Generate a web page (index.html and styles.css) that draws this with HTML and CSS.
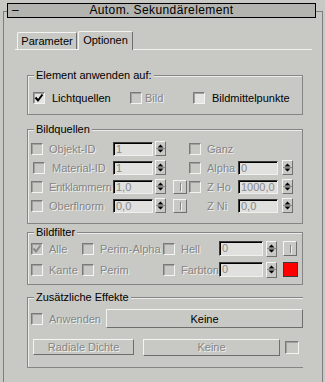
FILE: index.html
```html
<!DOCTYPE html>
<html lang="de">
<head>
  <meta charset="UTF-8" />
  <title>Autom. Sekundärelement</title>
  <link rel="stylesheet" href="styles.css">
</head>
<body>

  <div class="rollout">
    <!-- Rollout title -->
    <div class="titlebar">
      <span class="minus">–</span>
      <span class="title">Autom. Sekundärelement</span>
      <span class="title-pad"></span>
    </div>

    <!-- Tabs -->
    <div class="tabs">
      <div class="tab">Parameter</div>
      <div class="tab active">Optionen</div>
    </div>

    <!-- Element anwenden auf -->
    <div class="group g-apply">
      <div class="group-title">Element anwenden auf:</div>
      <div class="group-body">
        <div class="apply-row">
          <div class="opt w-light">
            <span class="cb on"><svg width="10" height="10" viewBox="0 0 10 10"><path d="M1.5 4.5l2.5 3 4.5-6" fill="none" stroke="#000" stroke-width="2"/></svg></span>
            <span>Lichtquellen</span>
          </div>
          <div class="opt w-bild tight">
            <span class="cb"></span>
            <span class="off">Bild</span>
          </div>
          <div class="opt">
            <span class="cb on"></span>
            <span>Bildmittelpunkte</span>
          </div>
        </div>
      </div>
    </div>

    <!-- Bildquellen -->
    <div class="group g-src">
      <div class="group-title">Bildquellen</div>
      <div class="group-body">
        <div class="src-row">
          <span class="cb"></span>
          <span class="lbl off w64">Objekt-ID</span>
          <span class="field w40">1</span>
          <span class="spin"><svg width="9" height="13" viewBox="0 0 9 13"><path d="M1.5 5.5h6L4.5 2.5zM1.5 7.5h6L4.5 10.5z"/><path d="M0 6.5h9" stroke="#8a8a8a"/></svg></span>
          <span class="slot"></span>
          <span class="cb"></span>
          <span class="lbl off w31">Ganz</span>
        </div>
        <div class="src-row">
          <span class="cb nudge"></span>
          <span class="lbl off w61">Material-ID</span>
          <span class="field w40">1</span>
          <span class="spin"><svg width="9" height="13" viewBox="0 0 9 13"><path d="M1.5 5.5h6L4.5 2.5zM1.5 7.5h6L4.5 10.5z"/><path d="M0 6.5h9" stroke="#8a8a8a"/></svg></span>
          <span class="slot"></span>
          <span class="cb"></span>
          <span class="lbl off w31">Alpha</span>
          <span class="field w40 gap4">0</span>
          <span class="spin"><svg width="9" height="13" viewBox="0 0 9 13"><path d="M1.5 5.5h6L4.5 2.5zM1.5 7.5h6L4.5 10.5z"/><path d="M0 6.5h9" stroke="#8a8a8a"/></svg></span>
        </div>
        <div class="src-row">
          <span class="cb"></span>
          <span class="lbl off w64 narrow">Entklammern</span>
          <span class="field w40">1,0</span>
          <span class="spin"><svg width="9" height="13" viewBox="0 0 9 13"><path d="M1.5 5.5h6L4.5 2.5zM1.5 7.5h6L4.5 10.5z"/><path d="M0 6.5h9" stroke="#8a8a8a"/></svg></span>
          <span class="slot tick-btn"><i></i></span>
          <span class="cb"></span>
          <span class="lbl off w31">Z Ho</span>
          <span class="field w40 gap4">1000,0</span>
          <span class="spin"><svg width="9" height="13" viewBox="0 0 9 13"><path d="M1.5 5.5h6L4.5 2.5zM1.5 7.5h6L4.5 10.5z"/><path d="M0 6.5h9" stroke="#8a8a8a"/></svg></span>
        </div>
        <div class="src-row">
          <span class="cb"></span>
          <span class="lbl off w64">Oberflnorm</span>
          <span class="field w40">0,0</span>
          <span class="spin"><svg width="9" height="13" viewBox="0 0 9 13"><path d="M1.5 5.5h6L4.5 2.5zM1.5 7.5h6L4.5 10.5z"/><path d="M0 6.5h9" stroke="#8a8a8a"/></svg></span>
          <span class="slot tick-btn"><i></i></span>
          <span class="cb blank"></span>
          <span class="lbl off w31">Z Ni</span>
          <span class="field w40 gap4">0,0</span>
          <span class="spin"><svg width="9" height="13" viewBox="0 0 9 13"><path d="M1.5 5.5h6L4.5 2.5zM1.5 7.5h6L4.5 10.5z"/><path d="M0 6.5h9" stroke="#8a8a8a"/></svg></span>
        </div>
      </div>
    </div>

    <!-- Bildfilter -->
    <div class="group g-filter">
      <div class="group-title">Bildfilter</div>
      <div class="group-body">
        <div class="filter-row">
          <span class="cb"><svg width="10" height="10" viewBox="0 0 10 10"><path d="M1.5 4.5l2.5 3 4.5-6" fill="none" stroke="#8a8a8a" stroke-width="2"/></svg></span>
          <span class="lbl off w33">Alle</span>
          <span class="cb"></span>
          <span class="lbl off w63">Perim-Alpha</span>
          <span class="cb"></span>
          <span class="lbl off w38">Hell</span>
          <span class="field w44">0</span>
          <span class="spin tall"><svg width="9" height="13" viewBox="0 0 9 13"><path d="M1.5 5.5h6L4.5 2.5zM1.5 7.5h6L4.5 10.5z"/><path d="M0 6.5h9" stroke="#8a8a8a"/></svg></span>
          <span class="tick-btn sq"><i></i></span>
        </div>
        <div class="filter-row">
          <span class="cb"></span>
          <span class="lbl off w33">Kante</span>
          <span class="cb"></span>
          <span class="lbl off w63">Perim</span>
          <span class="cb"></span>
          <span class="lbl off w38">Farbton</span>
          <span class="field w44">0</span>
          <span class="spin tall"><svg width="9" height="13" viewBox="0 0 9 13"><path d="M1.5 5.5h6L4.5 2.5zM1.5 7.5h6L4.5 10.5z"/><path d="M0 6.5h9" stroke="#8a8a8a"/></svg></span>
          <span class="swatch"></span>
        </div>
      </div>
    </div>

    <!-- Zusätzliche Effekte -->
    <div class="group g-extra">
      <div class="group-title">Zusätzliche Effekte</div>
      <div class="group-body">
        <div class="extra-row">
          <span class="cb"></span>
          <span class="lbl off w57">Anwenden</span>
          <span class="btn btn-keine">Keine</span>
        </div>
        <div class="extra-row second">
          <span class="btn off btn-radial">Radiale Dichte</span>
          <span class="btn off btn-keine2">Keine</span>
          <span class="cb big"></span>
        </div>
      </div>
    </div>
  </div>

</body>
</html>
```

FILE: styles.css
```css
* {
  box-sizing: border-box;
}

body {
  margin: 0;
  width: 325px;
  height: 382px;
  overflow: hidden;
  background-color: #c8c9c4;
  font-family: "Liberation Sans", Arial, sans-serif;
  font-size: 11px;
  color: #000;
}

.rollout {
  margin: 11px 0 0 3px;
  width: 320px;
  height: 380px;
  border: 1px solid #7e7e7e;
  border-bottom: 0;
}

/* title bar */
.titlebar {
  display: flex;
  align-items: center;
  width: 309px;
  height: 15px;
  margin: -9px 0 0 3px;
  border: 1px solid #000;
  background-color: #b3b4af;
  font-size: 12px;
  line-height: 13px;
}

.minus {
  width: 16px;
  padding-left: 4px;
}

.title {
  flex: 1;
  text-align: center;
  letter-spacing: 0.4px;
}

.title-pad {
  width: 16px;
}

/* tabs */
.tabs {
  display: flex;
  align-items: flex-end;
  gap: 1px;
  width: 297px;
  height: 19px;
  margin: 13px 0 0 11px;
  padding-left: 2px;
  border-bottom: 1px solid #f2f2f0;
}

.tab {
  height: 17px;
  width: 60px;
  border: 1px solid #f4f4f2;
  border-right-color: #6e6e6e;
  border-bottom: 0;
  border-radius: 2px 2px 0 0;
  text-align: center;
  line-height: 16px;
}

.tab.active {
  width: 55px;
  height: 19px;
  margin-bottom: -1px;
  background-color: #c8c9c4;
}

/* group boxes */
.group {
  width: 276px;
  margin-left: 23px;
  border: 1px solid #858585;
  box-shadow: inset 1px 1px 0 #ececea;
}

.group-title {
  width: fit-content;
  margin: -7px 0 -6px 6px;
  padding: 0 2px;
  background-color: #c8c9c4;
  line-height: 13px;
}

.g-apply {
  margin-top: 25px;
}

.g-apply .group-body {
  padding: 12px 0 7px 5px;
}

.g-src {
  margin-top: 14px;
}

.g-src .group-body {
  padding: 9px 0 8px 3px;
}

.g-filter {
  margin-top: 8px;
}

.g-filter .group-body {
  padding: 5px 0 4px 3px;
}

.g-extra {
  margin-top: 12px;
  border-right: 0;
}

.g-extra .group-body {
  padding: 11px 0 12px 3px;
}

/* rows */
.apply-row {
  display: flex;
  align-items: center;
  height: 19px;
}

.opt {
  display: flex;
  align-items: center;
  gap: 7px;
}

.opt.tight {
  gap: 3px;
}

.w-light {
  width: 97px;
}

.w-bild {
  width: 63px;
}

.src-row {
  display: flex;
  align-items: center;
  height: 19px;
}

.filter-row {
  display: flex;
  align-items: center;
  height: 21px;
}

.extra-row {
  display: flex;
  align-items: center;
  height: 19px;
}

.extra-row.second {
  height: 16px;
  margin-top: 11px;
  padding-left: 2px;
}

/* labels */
.lbl {
  flex: none;
  white-space: nowrap;
}

.lbl.narrow {
  letter-spacing: -0.2px;
}

.off {
  color: #858585;
  text-shadow: 1px 1px 0 #f0f0ee;
}

.w31 { width: 31px; }
.w33 { width: 33px; }
.w38 { width: 38px; }
.w57 { width: 57px; }
.w61 { width: 61px; }
.w63 { width: 63px; }
.w64 { width: 64px; }

/* checkbox */
.cb {
  flex: none;
  display: flex;
  align-items: center;
  justify-content: center;
  width: 12px;
  height: 12px;
  margin-right: 6px;
  border: 1px solid;
  border-color: #7a7a7a #f4f4f2 #f4f4f2 #7a7a7a;
  box-shadow: inset 1px 1px 0 #a0a09c;
}

.opt .cb {
  margin-right: 0;
}

.cb.on {
  background-color: #e4e4e2;
}

.cb.nudge {
  margin-left: 2px;
  margin-right: 7px;
}

.cb.blank {
  border: 0;
  box-shadow: none;
}

.cb.big {
  width: 14px;
  height: 13px;
  margin: 0 0 0 5px;
}

/* numeric fields */
.field {
  flex: none;
  height: 14px;
  margin-right: 2px;
  padding-left: 2px;
  border: 1px solid;
  border-color: #3a3a3a #f0f0ee #f0f0ee #3a3a3a;
  box-shadow: inset 1px 1px 0 #000;
  background-color: #e0e0de;
  color: #8a8a8a;
  font-size: 11px;
  line-height: 12px;
  white-space: nowrap;
  overflow: hidden;
}

.w40 { width: 40px; }

.w44 {
  width: 44px;
  height: 15px;
  margin-right: 3px;
}

.field.gap4 {
  margin-right: 4px;
}

/* spinner */
.spin {
  flex: none;
  display: flex;
  align-items: center;
  justify-content: center;
  width: 11px;
  height: 15px;
  margin-right: 7px;
  border: 1px solid;
  border-color: #f4f4f2 #707070 #707070 #f4f4f2;
}

.spin.tall {
  height: 16px;
  margin-right: 6px;
}

/* small buttons */
.slot {
  flex: none;
  width: 14px;
  height: 14px;
  margin-right: 2px;
}

.tick-btn {
  display: flex;
  align-items: center;
  justify-content: center;
  width: 14px;
  height: 14px;
  border: 1px solid;
  border-color: #f4f4f2 #707070 #707070 #f4f4f2;
}

.tick-btn i {
  width: 1px;
  height: 8px;
  background-color: #858585;
  box-shadow: 1px 1px 0 #f0f0ee;
}

.tick-btn.sq {
  flex: none;
  height: 15px;
}

.swatch {
  flex: none;
  width: 15px;
  height: 15px;
  border: 1px solid #3a3a3a;
  background-color: #ff0000;
}

.btn {
  flex: none;
  display: flex;
  align-items: center;
  justify-content: center;
  height: 19px;
  border: 1px solid;
  border-color: #f4f4f2 #6e6e6e #6e6e6e #f4f4f2;
}

.btn-keine {
  width: 197px;
}

.btn-radial {
  width: 101px;
  height: 16px;
}

.btn-keine2 {
  width: 137px;
  height: 17px;
  margin-left: 9px;
}
```
